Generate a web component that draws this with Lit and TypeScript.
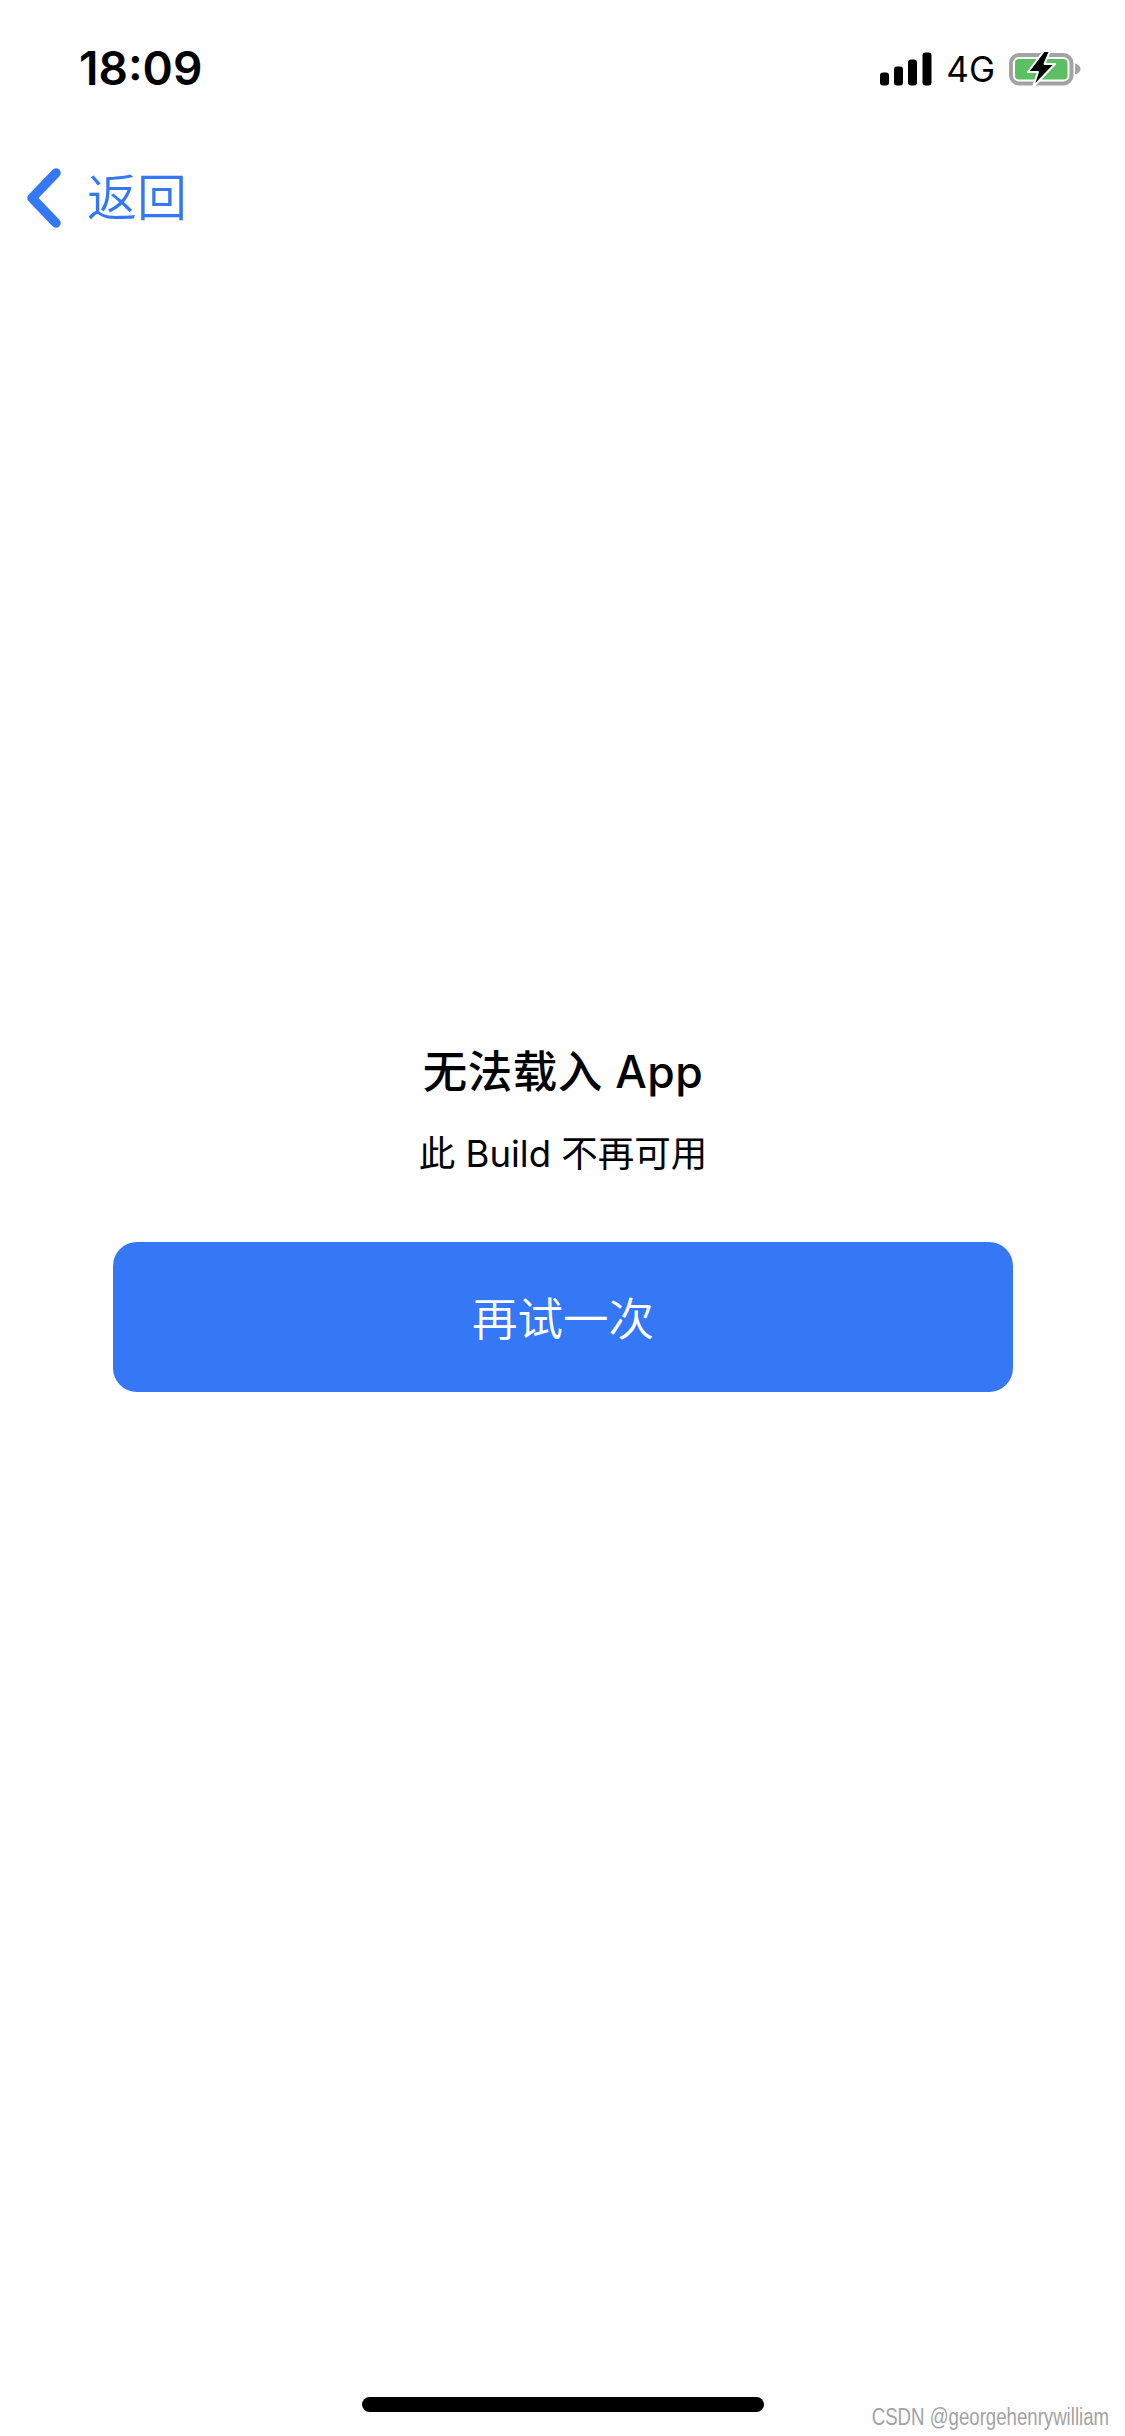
import { LitElement, html, css } from 'lit';
import { customElement } from 'lit/decorators.js';

@customElement('app-root')
export class AppRoot extends LitElement {
  static styles = css`
    :host {
      display: block;
      width: 1125px;
      height: 2436px;
      background: #fefefe;
      position: relative;
      overflow: hidden;
      font-family: "Inter", "Noto Sans CJK SC", sans-serif;
      color: #000;
    }

    .page {
      height: 100%;
      display: flex;
      flex-direction: column;
    }

    /* status bar */
    .status {
      height: 136px;
      box-sizing: border-box;
      padding: 0 43px 0 79px;
      display: flex;
      align-items: center;
      justify-content: space-between;
    }

    .time {
      font-size: 46px;
      font-weight: 600;
      line-height: 1;
    }

    .indicators {
      display: flex;
      align-items: center;
    }

    .net {
      font-size: 35px;
      line-height: 1;
      margin: 0 14px;
      padding-top: 2px;
    }

    /* nav */
    .nav {
      height: 124px;
      box-sizing: border-box;
      padding-left: 26px;
      display: flex;
      align-items: center;
      gap: 25px;
      color: #3478f6;
    }

    .back-label {
      font-size: 50px;
      font-weight: 350;
      line-height: 1;
    }

    /* message */
    .message {
      padding: 0 112px 0 113px;
      margin-top: 776px;
      display: flex;
      flex-direction: column;
      align-items: center;
    }

    .title {
      font-size: 44.5px;
      font-weight: 500;
      line-height: 72px;
      letter-spacing: 0.5px;
    }

    .subtitle {
      font-size: 36.5px;
      line-height: 56px;
      margin-top: 18px;
    }

    .retry {
      width: 100%;
      height: 150px;
      margin-top: 60px;
      border: none;
      border-radius: 24px;
      background: #3478f6;
      color: #fff;
      font-family: inherit;
      font-size: 45.5px;
      font-weight: 350;
      padding: 0 0 3px;
    }

    .home-bar {
      position: absolute;
      left: 362px;
      top: 2397px;
      width: 402px;
      height: 15px;
      border-radius: 8px;
      background: #000;
    }

    .watermark {
      position: absolute;
      right: 16px;
      top: 2405px;
      font-family: "Liberation Sans", sans-serif;
      font-size: 23px;
      line-height: 24px;
      color: #a3a3a3;
      white-space: nowrap;
      transform: scaleX(0.81);
      transform-origin: right center;
    }
  `;

  private renderSignal() {
    return html`<svg width="52" height="36" viewBox="0 -2.500 52 36">
      <rect x="0" y="20" width="9" height="13" rx="3" fill="#000"></rect>
      <rect x="14" y="14" width="9" height="19" rx="3" fill="#000"></rect>
      <rect x="28" y="7" width="9" height="26" rx="3" fill="#000"></rect>
      <rect x="42.5" y="0" width="9" height="33" rx="3" fill="#000"></rect>
    </svg>`;
  }

  private renderBattery() {
    return html`<svg width="73" height="40" viewBox="0 -1 73 40">
      <rect x="2" y="6" width="60.500" height="28.500" rx="8" fill="none" stroke="#a3a3a3" stroke-width="4"></rect>
      <rect x="6" y="10" width="52.500" height="20.500" rx="4" fill="#5dbf63"></rect>
      <path d="M66 14.500c3 .8 5.500 3 5.500 5.500s-2.500 4.700-5.500 5.500z" fill="#a3a3a3"></path>
      <path d="M35 2 L19 23 H29 L24 38 L46 15 H35.500 L41 2 Z" fill="#000" stroke="#fff" stroke-width="2" stroke-linejoin="round"></path>
    </svg>`;
  }

  render() {
    return html`
      <div class="page">
        <div class="status">
          <span class="time">18:09</span>
          <div class="indicators">
            ${this.renderSignal()}
            <span class="net">4G</span>
            ${this.renderBattery()}
          </div>
        </div>
        <div class="nav">
          <svg width="36" height="60" viewBox="0 0 36 60">
            <path d="M30 5 L6 30 L30 55" fill="none" stroke="#3478f6" stroke-width="9.500" stroke-linecap="round" stroke-linejoin="round"></path>
          </svg>
          <span class="back-label">返回</span>
        </div>
        <div class="message">
          <div class="title">无法载入 App</div>
          <div class="subtitle">此 Build 不再可用</div>
          <button class="retry">再试一次</button>
        </div>
      </div>
      <div class="home-bar"></div>
      <div class="watermark">CSDN @georgehenrywilliam</div>
    `;
  }
}
